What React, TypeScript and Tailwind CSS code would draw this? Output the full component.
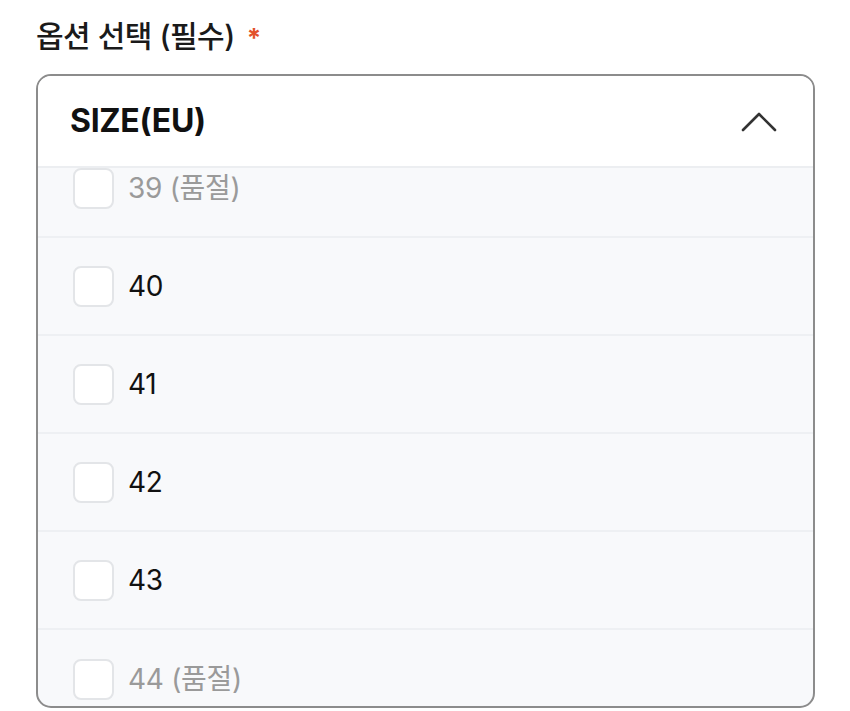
const sizes = [
  { label: "39 (품절)", soldOut: true },
  { label: "40", soldOut: false },
  { label: "41", soldOut: false },
  { label: "42", soldOut: false },
  { label: "43", soldOut: false },
  { label: "44 (품절)", soldOut: true },
];

export default function App() {
  return (
    <div
      className="min-h-screen bg-white px-9 pt-[16px] text-[#111]"
      style={{ fontFamily: "Inter, 'Noto Sans CJK KR', sans-serif" }}
    >
      {/* Label */}
      <div className="flex items-center gap-[12px] h-[40px]">
        <span className="text-[30px] font-medium tracking-[-0.5px] text-[#1a1a1a]">옵션 선택 (필수)</span>
        <span className="text-[26px] font-bold text-[#e2512b] leading-none mt-1">*</span>
      </div>

      {/* Select box */}
      <div className="mt-[18px] w-[779px] h-[634px] rounded-[15px] border-2 border-[#8c8c8c] overflow-hidden flex flex-col bg-[#f8f9fb]">
        <div className="h-[92px] shrink-0 flex items-center justify-between pl-[32px] pr-[36px] bg-white border-b-2 border-[#eceef1]">
          <span className="text-[32px] font-bold tracking-[-0.3px] text-[#111]">SIZE(EU)</span>
          <svg width="36" height="22" viewBox="0 0 36 22" fill="none" className="mt-[2px]">
            <polyline
              points="2,19 18,3 34,19"
              stroke="#333"
              strokeWidth="2.6"
              strokeLinecap="round"
              strokeLinejoin="round"
            />
          </svg>
        </div>

        <div className="flex-1 overflow-hidden">
          <div className="-mt-[28px]">
            {sizes.map((s, i) => (
              <div
                key={s.label}
                className={`h-[98px] flex items-center gap-[14px] pl-[35px] ${
                  i < sizes.length - 1 ? "border-b-2 border-[#eef0f3]" : ""
                }`}
              >
                <div className="w-[41px] h-[41px] rounded-[8px] border-2 border-[#e3e5e8] bg-white" />
                <span
                  className={`text-[28px] tracking-[-0.3px] ${
                    s.soldOut ? "text-[#9a9a9a]" : "text-[#111]"
                  }`}
                >
                  {s.label}
                </span>
              </div>
            ))}
          </div>
        </div>
      </div>
    </div>
  );
}
